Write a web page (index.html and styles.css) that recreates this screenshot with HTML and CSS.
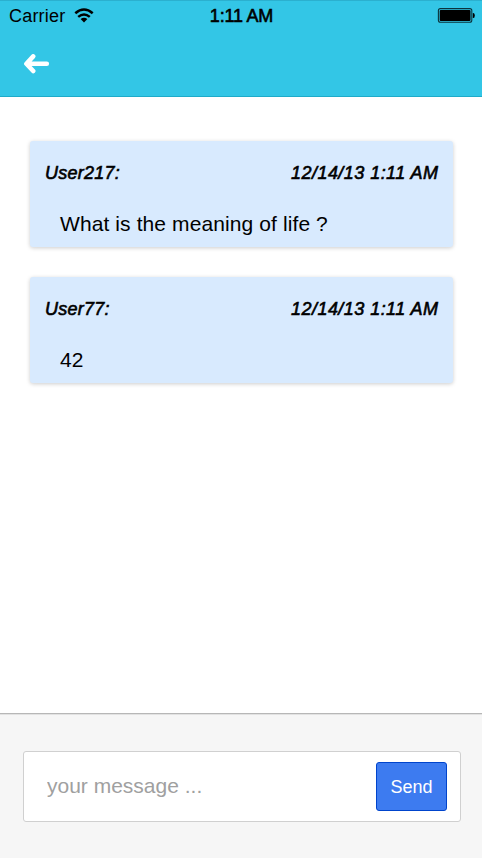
FILE: index.html
```html
<!DOCTYPE html>
<html lang="en">
<head>
<meta charset="utf-8">
<title>Chat</title>
<link rel="stylesheet" href="styles.css">
</head>
<body>
<div class="app">
  <header class="header">
    <div class="status">
      <div class="carrier"><span>Carrier</span>
        <svg class="wifi" width="20" height="15" viewBox="0 0 20 15" fill="none" stroke="#000" stroke-width="2.5"><path d="M1.3 5.3Q10-2.3 18.7 5.3M4.2 8.9Q10 4 15.8 8.9"/><path d="M6.6 11.1Q10 8.3 13.4 11.1L10 14.4Z" fill="#000" stroke="none"/></svg>
      </div>
      <div class="clock">1:11 AM</div>
      <svg class="battery" width="38" height="15" viewBox="0 0 38 15"><rect x="1.4" y=".6" width="33.4" height="13.6" rx="2" fill="none" stroke="#0b343d" stroke-width="1.1"/><rect x="2.7" y="1.9" width="30.8" height="11" rx="1"/><path d="M35.8 5h.5q1.5 0 1.5 2.5t-1.5 2.5h-.5z"/></svg>
    </div>
    <a class="back" aria-label="Back"><svg width="26" height="20" viewBox="0 0 26 20" fill="none" stroke="#fff" stroke-width="4.6" stroke-linecap="round" stroke-linejoin="round"><path d="M9.2 2.4L2.4 9.7l6.8 7.3M3.2 9.7h19.6"/></svg></a>
  </header>
  <main class="messages">
    <article class="message">
      <div class="meta"><span class="user">User217:</span><time class="time">12/14/13 1:11 AM</time></div>
      <p class="text">What is the meaning of life ?</p>
    </article>
    <article class="message">
      <div class="meta"><span class="user">User77:</span><time class="time">12/14/13 1:11 AM</time></div>
      <p class="text">42</p>
    </article>
  </main>
  <footer class="footer">
    <div class="composer"><input class="input" type="text" placeholder="your message ..."><button class="send">Send</button></div>
  </footer>
</div>
</body>
</html>
```
FILE: styles.css
```css
* { box-sizing: border-box; }
body { margin: 0; background: #fff; color: #000; font-family: "Liberation Sans", Arial, sans-serif; }
.app { display: flex; flex-direction: column; height: 858px; overflow: hidden; }
.header { height: 97px; background: #33c6e6; border-top: 1px solid #2bb0cf; border-bottom: 1px solid #1fabc9; }
.status { display: grid; grid-template-columns: 1fr auto 1fr; align-items: start; height: 31px; padding: 0 7px 0 9px; }
.carrier { display: flex; align-items: flex-start; font-size: 18px; line-height: 30px; letter-spacing: .2px; }
.wifi { margin: 7px 0 0 8.6px; }
.clock { margin-right: 1px; font-size: 18px; line-height: 30px; letter-spacing: -.2px; -webkit-text-stroke: .6px #000; }
.battery { justify-self: end; margin-top: 7px; }
.back { display: block; width: 26px; height: 20px; margin: 22px 0 0 24px; }
.back svg { display: block; }
.messages { flex: 1; display: flex; flex-direction: column; gap: 30px; padding: 44px 29px 0 30px; }
.message { height: 106px; padding: 20px 15px 0; background: #d8eafe; border-radius: 3px; box-shadow: 0 1px 4px rgba(0,0,0,.2); }
.meta { display: flex; justify-content: space-between; font-size: 18px; line-height: 24px; font-style: italic; -webkit-text-stroke: .6px #000; }
.user { letter-spacing: .25px; }
.time { margin-right: -.4px; letter-spacing: .45px; }
.text { margin: 26px 0 0 15px; font-size: 21px; line-height: 26px; letter-spacing: .1px; }
.footer { height: 145px; padding: 37px 21px 0 23px; background: #f6f6f6; border-top: 1px solid #b7b7b7; box-shadow: inset 0 1px #e2e2e2; }
.composer { display: flex; align-items: center; height: 71px; padding: 0 13px 0 23px; background: #fff; border: 1px solid #d0d0d0; border-radius: 3px; }
.input { flex: 1; min-width: 0; padding: 0 0 2px; border: 0; outline: 0; background: none; font: 21px "Liberation Sans", Arial, sans-serif; }
.input::placeholder { color: #a0a0a0; }
.send { width: 71px; height: 49px; padding: 2px 0 0; color: #fff; background: #3d7bf0; border: 1px solid #0044cc; border-radius: 3px; font: 18px "Liberation Sans", Arial, sans-serif; }
```
